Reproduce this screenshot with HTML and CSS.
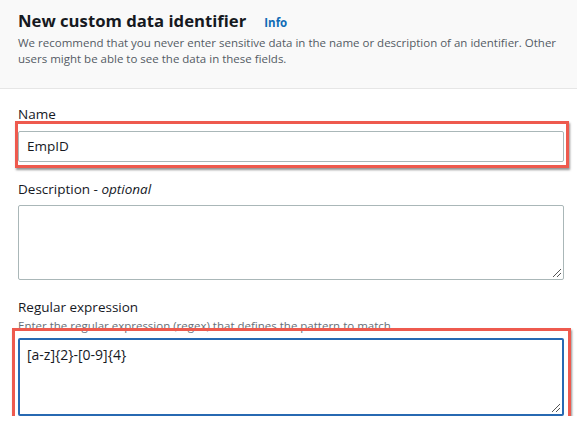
FILE: index.html
```html
<!DOCTYPE html>
<html>
<head>
<meta charset="utf-8">
<link rel="stylesheet" href="styles.css">
</head>
<body>
<div class="header">
  <div class="title-row">
    <h1 class="title">New custom data identifier</h1>
    <a class="info">Info</a>
  </div>
  <p class="desc">We recommend that you never enter sensitive data in the name or description of an identifier. Other users might be able to see the data in these fields.</p>
</div>
<div class="form">
  <div class="field field-name">
    <label class="label">Name</label>
    <div class="control mark mark-name">
      <div class="input">EmpID</div>
    </div>
  </div>
  <div class="field field-desc">
    <label class="label">Description - <i>optional</i></label>
    <div class="control">
      <div class="textarea"><span class="grip"></span></div>
    </div>
  </div>
  <div class="field field-regex">
    <label class="label">Regular expression</label>
    <div class="hint">Enter the regular expression (regex) that defines the pattern to match.</div>
    <div class="control mark mark-regex">
      <div class="textarea focused">[a-z]{2}-[0-9]{4}<span class="grip"></span></div>
    </div>
  </div>
</div>
</body>
</html>
```
FILE: styles.css
```css
html, body {
  margin: 0;
  padding: 0;
  background: #ffffff;
  font-family: "Open Sans", "Noto Sans", sans-serif;
  color: #16191f;
}
.header {
  background: #f9f9f9;
  border-bottom: 1px solid #e6e6e6;
  height: 89px;
  box-sizing: border-box;
  padding: 10px 16px 0 18px;
}
.title-row {
  display: flex;
  align-items: baseline;
  gap: 18px;
}
.title {
  margin: 0;
  font-size: 16.7px;
  font-weight: 700;
  line-height: 22px;
  color: #16191f;
}
.info {
  font-size: 11.5px;
  font-weight: 700;
  color: #0f6cb6;
}
.desc {
  margin: 2.5px 0 0 0;
  font-size: 11.5px;
  line-height: 16.5px;
  color: #545b64;
}
.form {
  padding: 15px 13px 0 18px;
}
.field {
  display: flex;
  flex-direction: column;
}
.label {
  font-size: 13.5px;
  line-height: 20px;
  color: #16191f;
}
.field-name .control { margin-top: 7px; }
.field-desc { margin-top: 17px; }
.field-desc .control { margin-top: 6px; }
.field-regex { margin-top: 17px; }
.hint {
  font-size: 11.5px;
  line-height: 16px;
  color: #687078;
  margin-top: 1px;
}
.field-regex .control { margin-top: 3.5px; }
.control {
  position: relative;
}
.input {
  height: 31px;
  box-sizing: border-box;
  border: 1px solid #aab7b8;
  border-radius: 2px;
  background: #fff;
  font-size: 13.5px;
  line-height: 29px;
  padding: 0 8px;
}
.textarea {
  position: relative;
  height: 75px;
  box-sizing: border-box;
  border: 1px solid #aab7b8;
  border-radius: 2px;
  background: #fff;
  font-size: 14px;
  line-height: 20px;
  padding: 6px 8px;
}
.textarea.focused {
  height: 78px;
  border: 2px solid #2769b2;
  padding: 5px 7px;
}
.grip {
  position: absolute;
  right: 2px;
  bottom: 2px;
  width: 8px;
  height: 8px;
  background:
    linear-gradient(135deg, transparent 0 45%, #555 45% 55%, transparent 55% 70%, #555 70% 80%, transparent 80%);
}
.mark::after {
  content: "";
  position: absolute;
  border: 3px solid #ee5a4e;
  box-shadow: 1px 2px 2px rgba(60, 60, 60, 0.55);
  pointer-events: none;
}
.mark-name::after {
  left: -3px;
  top: -10px;
  right: -5px;
  bottom: -6px;
}
.mark-regex::after {
  left: -6px;
  top: -10px;
  right: -7px;
  bottom: -3px;
}
```
